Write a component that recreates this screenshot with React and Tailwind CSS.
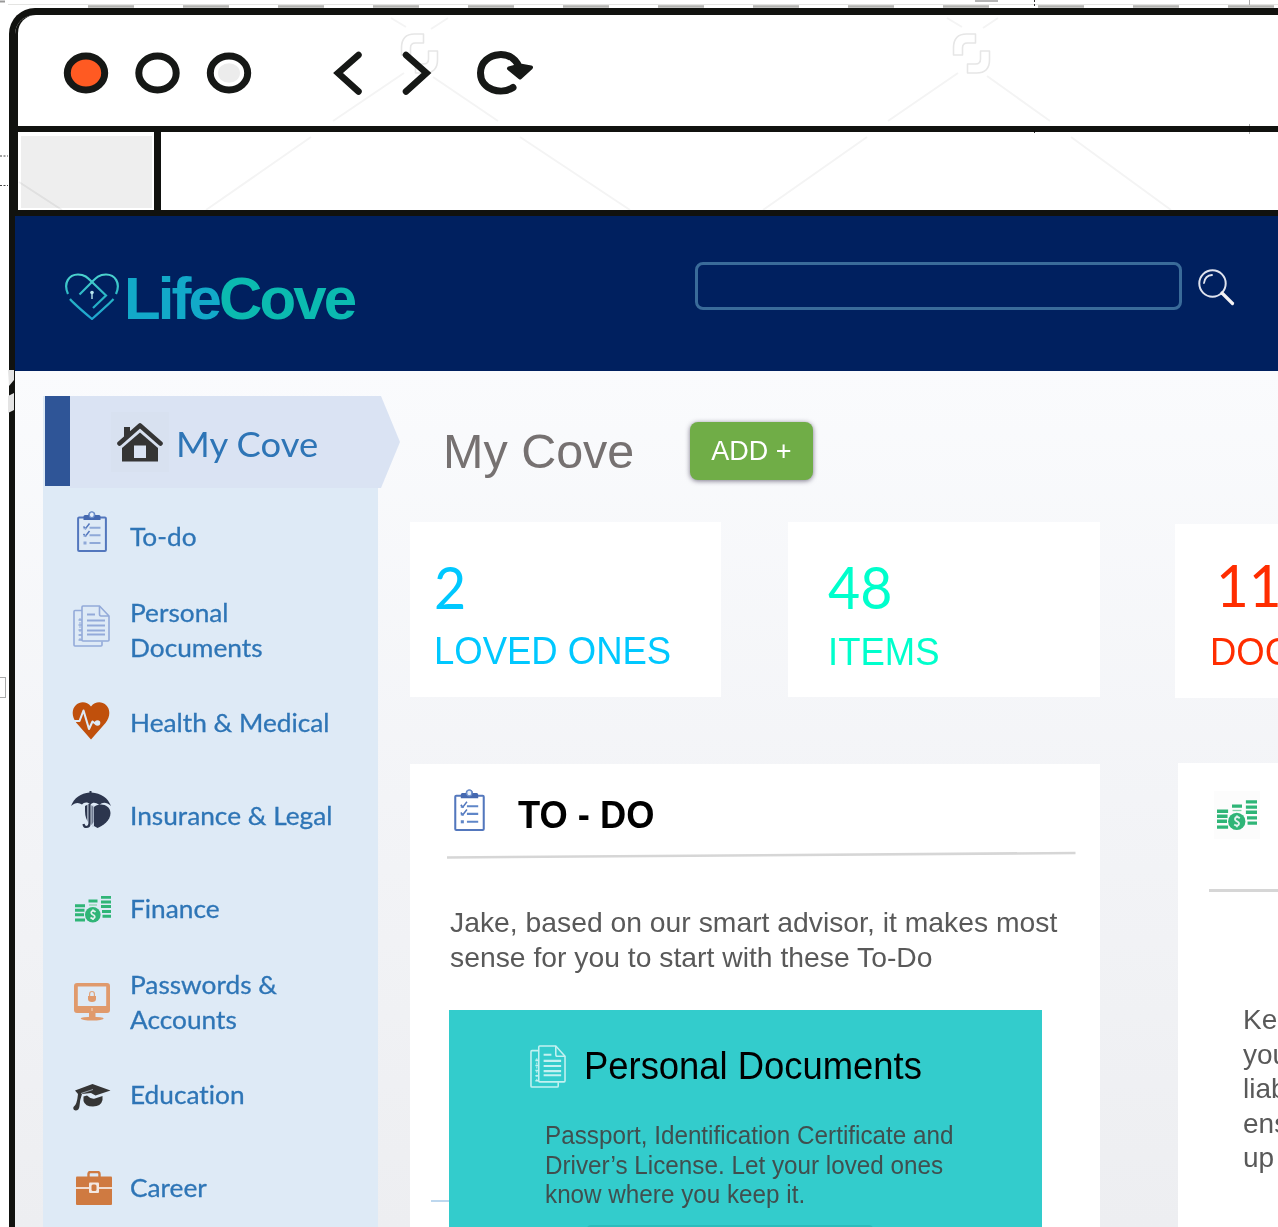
import React from "react";

function ClipboardIcon({ className, strong }) {
  const line = strong ? "#5f86c8" : "#8fa9d8";
  return (
    <svg className={className} viewBox="0 0 30 41" fill="none">
      <rect x="1.100" y="6.500" width="27.800" height="33.500" rx="1" stroke="#5377bd" strokeWidth="2" />
      <path d="M6.500 9V5.500Q6.500 4 8 4H11.300A3.400 3.400 0 0 1 18.300 4H22Q23.500 4 23.500 5.500V9Z" fill="#4468b0" />
      <ellipse cx="14.800" cy="3.800" rx="2.500" ry="2.800" fill="#e8f0fa" stroke="#6d8fcb" strokeWidth="1.200" />
      <g stroke={line} strokeWidth="2.100">
        <path d="M12.500 16.800H23.500M12.500 24.300H23.500M12.500 32H23.500" />
        <path d="M6.500 32H9.500" strokeWidth="3" />
      </g>
      <path d="M6.500 15.500L8.500 17.700L12.500 12.500M6.500 23L8.500 25.200L12.500 20" stroke="#5377bd" strokeWidth="1.500" />
      <path d="M6.500 17.500H9.500M6.500 25H9.500" stroke={line} strokeWidth="1.500" />
    </svg>
  );
}

function DocumentsIcon({ className }) {
  return (
    <svg className={className} viewBox="0 0 37 42" fill="none" stroke="currentColor" preserveAspectRatio="none">
      <path d="M9 5.500H2Q1 5.500 1 6.500V40Q1 41 2 41H28Q29 41 29 40V36.500" strokeWidth="1.600" />
      <path d="M26.500 1H10Q9 1 9 2V35Q9 36 10 36H35Q36 36 36 35V11Z" strokeWidth="1.600" />
      <path d="M26.500 1V9Q26.500 11 28 11H36" strokeWidth="1.600" />
      <path d="M14 9.500H22M14 15.500H32M14 20.500H32M14 25.500H32M14 29.500H32" strokeWidth="2" />
      <path d="M5.500 15H9M5.500 20H9M5.500 25H9M5.500 30H9M5.500 35H9" strokeWidth="1.500" />
      <path d="M7 13V36" strokeWidth="1" strokeDasharray="2 2" />
    </svg>
  );
}

function HeartIcon({ className }) {
  return (
    <svg className={className} viewBox="0 0 38 38" fill="none">
      <path d="M19 37.500L4.500 21C-.5 15 -.5 7 4 3C8.500 -1 15 -.5 19 4.500C23 -.5 29.500 -1 34 3C38.500 7 38.500 15 33.500 21Z" fill="#c0500c" />
      <path d="M1 19H7.500L11.500 8.500L17 27L20.500 19.500L24 22" stroke="#deeaf6" strokeWidth="2.100" strokeLinejoin="round" />
      <circle cx="25.500" cy="21" r="2.800" fill="#deeaf6" />
    </svg>
  );
}

function UmbrellaIcon({ className }) {
  return (
    <svg className={className} viewBox="0 0 40 38" fill="none">
      <path d="M14 15C17 12.500 20 13 22.500 16V31Q20 36 18.500 33Q14 28 14 20Z" fill="#2c364e" />
      <path d="M23.500 15.500C30 11.500 39 14 39.500 22C39.500 30 32 34.500 26.500 37L23 35V16Z" fill="#2c364e" />
      <path d="M18.500 13V32.500Q18.500 36.500 15 36.500Q12.500 36.500 12 33.500" stroke="#deeaf6" strokeWidth="4.200" />
      <path d="M18.500 13V32.500Q18.500 36 15.200 36Q13 36 12.500 33" stroke="#2c364e" strokeWidth="2.200" />
      <path d="M22 14V36" stroke="#b9c5d8" strokeWidth="1" />
      <path d="M0 15C3 7 10 2 18.500 1.500V0H20.500V1.500C30 2 37 7 40 15C35.500 11 31.500 11 28.500 14C24 11 22 11 19.500 13.500C16.500 10.500 13 11 11 13.500C7.500 11 4 11.500 0 15Z" fill="#2c364e" />
    </svg>
  );
}

function FinanceIcon({ className }) {
  return (
    <svg className={className} viewBox="0 0 36 27" fill="none">
      <path d="M0 9.700H10M0 14.200H9.500M0 18.700H9M0 24H10M13.500 5H22.500M26 1.300H36M26 6H36M26 10.600H36M27 15.600H36M27.500 20.300H36" stroke="#2fb577" strokeWidth="3" />
      <path d="M14 9H22" stroke="#86d2ab" strokeWidth="1.200" />
      <circle cx="17.800" cy="18.800" r="7.800" fill="#2fb577" />
      <path d="M20.500 16Q18 14 16.500 15.700Q15.500 17.500 18 18.800Q20.500 20 19.500 21.800Q18 23.500 15.500 21.500M18 13.500V15M18 22.500V24" stroke="#e3f2ef" strokeWidth="1.700" />
    </svg>
  );
}

function MonitorIcon({ className }) {
  return (
    <svg className={className} viewBox="0 0 36 38" fill="none">
      <path d="M3 0H33Q36 0 36 3V27Q36 30 33 30H3Q0 30 0 27V3Q0 0 3 0ZM3.800 3.500V23H32.200V3.500Z" fill="#e09a6c" fillRule="evenodd" />
      <path d="M15 30H21.500V34H15Z" fill="#e09a6c" />
      <ellipse cx="18.200" cy="35.600" rx="11.500" ry="1.900" fill="#e09a6c" />
      <path d="M15.600 13V11Q15.600 8.500 18 8.500Q20.400 8.500 20.400 11V13" stroke="#e0a47c" strokeWidth="1.200" />
      <path d="M14 13H22V16Q22 19 18 19Q14 19 14 16Z" fill="#e09a6c" />
      <path d="M18 25V28" stroke="#f3d5c0" strokeWidth="1" />
    </svg>
  );
}

function CapIcon({ className }) {
  return (
    <svg className={className} viewBox="0 0 38 27" fill="none">
      <path d="M19.500 0L37.500 6.500L22.500 11.500L18 9L9 10Q7 15 6.500 22Q6 26.500 2.500 26.500Q-.5 26 .5 23Q4 21 5 10L2 6.500Z" fill="#353535" />
      <path d="M8 9.500L20 5.500" stroke="#b4bfca" strokeWidth=".8" />
      <path d="M10.500 12.500L14 11.500Q18 15.500 22 14.500L29.500 12V16Q28 22.500 20 22.500Q12 22.500 10.500 17Z" fill="#353535" />
    </svg>
  );
}

function BriefcaseIcon({ className }) {
  return (
    <svg className={className} viewBox="0 0 36 34" fill="none">
      <path d="M12.500 6V3Q12.500 1 14.500 1H21.500Q23.500 1 23.500 3V6" stroke="#cf7a41" strokeWidth="2.400" />
      <rect y="5.500" width="36" height="28.500" rx="1" fill="#cf7a41" />
      <path d="M0 17H36" stroke="#f0dccf" strokeWidth="1.800" />
      <rect x="13" y="11.500" width="10" height="10.500" rx="1" fill="#f3e8e2" />
      <rect x="15.500" y="13.500" width="5" height="6.500" rx="1.500" fill="#cf7a41" />
    </svg>
  );
}

function HouseIcon({ className }) {
  return (
    <svg className={className} viewBox="0 0 46 40" fill="none">
      <path d="M7 5H13V10L7 16Z" fill="#353535" />
      <path d="M2.500 21.500L23 3.500L43.500 21.500" stroke="#353535" strokeWidth="4.600" strokeLinecap="round" strokeLinejoin="round" />
      <path d="M23 10.500L41 26V39.500H5V26Z" fill="#353535" />
      <rect x="17" y="23.500" width="12" height="12.500" fill="#dae3f3" />
    </svg>
  );
}

function LogoMark() {
  return (
    <svg className="h-12 w-[54px] shrink-0" viewBox="0 0 54 48" fill="none" strokeWidth="2.200">
      <defs>
        <linearGradient id="mark" x1="0" y1="0" x2="0" y2="48" gradientUnits="userSpaceOnUse">
          <stop offset="0" stopColor="#4fd6cf" />
          <stop offset=".55" stopColor="#27b3c4" />
          <stop offset="1" stopColor="#1ea5d2" />
        </linearGradient>
      </defs>
      <g stroke="url(#mark)">
        <path d="M3 22C-2 11 4 2.500 13 2.500C20 2.500 23 6 27 10L41 23.500L28 36" />
        <path d="M51 22C56 11 50 2.500 41 2.500C33 2.500 30 7 26 11L14.500 22.500" />
        <path d="M5 27Q8 31 27 47Q45 31 48.500 27" />
      </g>
      <path d="M27 21V27" stroke="#b9e6ee" strokeWidth="1.400" />
      <circle cx="27" cy="20.500" r="1.800" fill="#b9e6ee" />
    </svg>
  );
}

function Watermark() {
  const glyph = "M1 19V15Q1 1 14 1H23V10H15Q10 10 10 15V22H1ZM28 18H37V27Q37 40 24 40H15V31H23Q28 31 28 26Z";
  return (
    <svg className="pointer-events-none absolute left-0 top-0 h-[216px] w-[1278px] mix-blend-multiply" viewBox="0 0 1278 216" fill="none" stroke="#f4f4f4" strokeWidth="2">
      <path d="M391 18L406 27M448 18L431 29M404 73L333 121M311 137L206 210M433 77L498 121M520 137L630 210" />
      <path d="M947 18L962 27M998 18L983 28M958 73L888 121M867 137L763 210M987 76L1050 121M1071 137L1171 210" />
      <path d="M19 182L62 210" stroke="#f0f0f0" />
      <g stroke="#e6e6e6" strokeWidth="1.600" strokeLinejoin="round">
        <path transform="translate(400.500 33)" d={glyph} />
        <path transform="translate(952.500 33)" d={glyph} />
      </g>
      <path d="M88 6.500H1278" stroke="#b3b3b0" strokeWidth="2.500" strokeDasharray="46 49" />
      <path d="M8 4.500H1278" stroke="#e4e4e2" strokeWidth="1" />
      <path d="M975 1H998" stroke="#b5b5b5" />
      <path d="M0 1.500H5" stroke="#999" />
      <path d="M0 156H8M0 185.500H8" stroke="#444" strokeWidth="1" strokeDasharray="2 1.500" />
      <path d="M1034.500 0V8M1034.500 131V134" stroke="#333" strokeWidth="1" strokeDasharray="2 2" />
      <path d="M1249.500 0V5M1249.500 124V134" stroke="#aaa" strokeWidth="1" />
    </svg>
  );
}

function BrowserControls() {
  return (
    <svg className="ml-11 h-[50px] w-[480px]" viewBox="62 47.500 480 50" fill="none" stroke="#161816" strokeWidth="7">
      <ellipse cx="86" cy="72.500" rx="18.700" ry="17" fill="#ff5a22" />
      <ellipse cx="157.500" cy="72.500" rx="18.700" ry="17" />
      <ellipse cx="229" cy="72.500" rx="18.700" ry="17" />
      <ellipse cx="229" cy="72.500" rx="11" ry="9.800" fill="#ececec" stroke="none" />
      <g strokeWidth="6.500" strokeLinecap="round" strokeLinejoin="miter">
        <path d="M358.500 54.500L338 72.500L358.500 91" />
        <path d="M406 54.500L426.500 72.500L406 91" />
        <path d="M513 87C502 94.500 480.500 90 480.500 72.500C480.500 50 517 47 519.500 70" strokeWidth="7" />
      </g>
      <path d="M509 68L520 65L531 67L520 77Z" fill="#161816" strokeWidth="4" strokeLinejoin="round" />
    </svg>
  );
}

function NavItem({ icon, children }) {
  return (
    <li className="flex h-[93px] items-center">
      <span className="relative ml-[27px] block h-[52px] w-11 shrink-0">{icon}</span>
      <span className="ml-4 origin-left scale-x-[1.05] whitespace-pre font-[Lato,sans-serif] text-[25px] leading-[34.500px] text-[#2e75b6] [-webkit-text-stroke:0.3px_#2e75b6] [font-variant-ligatures:none]">{children}</span>
    </li>
  );
}

function Sidebar() {
  return (
    <aside className="ml-7 mt-[25px] w-[335px] shrink-0 bg-[#deeaf6]">
      <div className="ml-0.5 flex h-[92px] w-[355px]">
        <div className="h-[90px] w-[25px] shrink-0 bg-[#2f5597]" />
        <div className="flex w-[330px] items-center bg-[#dae3f3] [clip-path:polygon(0_0,311px_0,100%_50%,311px_100%,0_100%)]">
          <span className="ml-[41px] flex h-[60px] w-[58px] items-center justify-center bg-[#d8e1f0]">
            <HouseIcon className="h-10 w-[46px]" />
          </span>
          <span className="ml-[7px] mt-0.5 origin-left scale-x-[1.04] whitespace-nowrap font-[Lato,sans-serif] text-[35px] leading-none text-[#2e75b6]">My Cove</span>
        </div>
      </div>
      <ul className="pt-0.5">
        <NavItem icon={<ClipboardIcon className="absolute left-[6.500px] top-0 h-[41px] w-[30px]" />}>To-do</NavItem>
        <NavItem icon={<DocumentsIcon className="absolute left-[3px] top-[1px] h-[42px] w-[37px] text-[#93aad9]" />}>{"Personal\nDocuments"}</NavItem>
        <NavItem icon={<HeartIcon className="absolute left-[2px] top-[5px] h-[38px] w-[38px]" />}>Health &amp; Medical</NavItem>
        <NavItem icon={<UmbrellaIcon className="absolute left-[1px] top-[1px] h-[38px] w-10" />}>Insurance &amp; Legal</NavItem>
        <NavItem icon={<FinanceIcon className="absolute left-[5px] top-[13px] h-[27px] w-9" />}>Finance</NavItem>
        <NavItem icon={<MonitorIcon className="absolute left-[4px] top-[7px] h-[38px] w-9" />}>{"Passwords &\nAccounts"}</NavItem>
        <NavItem icon={<CapIcon className="absolute left-[3px] top-[15.500px] h-[27px] w-[38px]" />}>Education</NavItem>
        <NavItem icon={<BriefcaseIcon className="absolute left-[6px] top-[9px] h-[34px] w-9" />}>Career</NavItem>
      </ul>
    </aside>
  );
}

function Stats() {
  return (
    <div className="mt-[42px] flex">
      <div className="h-[175px] w-[311px] shrink-0 bg-white pl-6 text-[#00c8ff]">
        <p className="mt-[35px] origin-left scale-x-[0.94] font-[Lato,sans-serif] text-[59px] leading-[60px]">2</p>
        <p className="mt-3 origin-left scale-x-[0.96] whitespace-nowrap text-[38px] leading-[44px]">LOVED ONES</p>
      </div>
      <div className="ml-[67px] h-[175px] w-[312px] shrink-0 bg-white pl-10 text-[#00ffcc]">
        <p className="mt-[35px] origin-left scale-x-[0.94] font-[Lato,sans-serif] text-[59px] leading-[60px]">48</p>
        <p className="mt-[13px] origin-left scale-x-[0.96] whitespace-nowrap text-[38px] leading-[44px]">ITEMS</p>
      </div>
      <div className="ml-[75px] mt-[2px] h-[174px] w-[311px] shrink-0 bg-white pl-[35px] text-[#ff2d00]">
        <p className="ml-[6px] mt-[31px] origin-left scale-x-[0.96] font-[Lato,sans-serif] text-[59px] leading-[60px]">11</p>
        <p className="mt-[15px] origin-left scale-x-[0.96] whitespace-nowrap text-[38px] leading-[44px]">DOC</p>
      </div>
    </div>
  );
}

function TodoPanel() {
  return (
    <section className="h-[480px] w-[690px] shrink-0 bg-white">
      <div className="flex h-[67px] items-end pl-[44px]">
        <ClipboardIcon strong className="h-[42px] w-[31px]" />
        <h2 className="ml-[33px] origin-left scale-x-[0.955] whitespace-nowrap text-[38px] font-bold leading-[32px] text-black">TO - DO</h2>
      </div>
      <svg className="ml-[37px] mt-5 block h-2 w-[630px]" viewBox="0 0 630 8">
        <path d="M0 6.500L628.500 2" stroke="#d6d6d6" strokeWidth="2.600" />
      </svg>
      <p className="ml-10 mt-[47px] w-max origin-left scale-x-[1.011] whitespace-nowrap text-[28px] leading-[34.500px] text-[#595959]">
        Jake, based on our smart advisor, it makes most
        <br />
        sense for you to start with these To-Do
      </p>
      <div className="mt-[35px] flex">
        <div className="ml-[21px] mt-[190px] h-0.5 w-[18px] bg-[#bdd7ee]" />
        <div className="h-[230px] w-[593px] bg-[#33cccc]">
          <div className="flex pl-[81px] pt-[35px]">
            <DocumentsIcon className="h-[43px] w-9 text-[#c4f1f1]" />
            <h3 className="ml-[18px] origin-left scale-x-[0.958] whitespace-nowrap text-[38px] leading-[42px] text-black">Personal Documents</h3>
          </div>
          <p className="ml-24 mt-[33px] w-max origin-left scale-x-[0.97] whitespace-nowrap text-[25px] leading-[29.500px] text-[#404f4f]">
            Passport, Identification Certificate and
            <br />
            Driver’s License. Let your loved ones
            <br />
            know where you keep it.
          </p>
          <div className="ml-[138px] mt-[15px] h-5 w-[286px] rounded bg-[#2cbcbc]" />
        </div>
      </div>
    </section>
  );
}

function FinancePanel() {
  return (
    <section className="-mt-px ml-[78px] h-[480px] w-[400px] shrink-0 bg-white">
      <div className="ml-[36px] mt-[28px] flex h-12 w-[46px] items-center justify-center bg-[#fcfcfc]">
        <FinanceIcon className="h-[31px] w-10" />
      </div>
      <div className="ml-[31px] mt-[50px] h-[3px] w-[369px] bg-[#d6d6d6]" />
      <p className="ml-[65px] mt-[111px] whitespace-nowrap text-[28px] leading-[34.500px] text-[#595959]">
        Ke
        <br />
        you
        <br />
        liab
        <br />
        ens
        <br />
        up
      </p>
    </section>
  );
}

export default function App() {
  return (
    <div className="relative h-[1227px] w-[1278px] overflow-hidden bg-white pt-2 font-['Liberation_Sans',Arial,sans-serif]">
      <div className="ml-[9px] h-[1219px] overflow-hidden rounded-tl-[26px] border-l-[6px] border-t-[7px] border-[#11120f]">
        <div className="bg-[#11120f] pl-[3px]">
          <div className="flex h-[111px] items-center rounded-tl-[18px] bg-white pt-1">
            <BrowserControls />
          </div>
          <div className="mt-[6px] flex h-[78px] bg-white">
            <div className="w-[136px] pb-0.5 pl-[3px] pr-0.5 pt-1">
              <div className="h-full bg-[#eeeeee]" />
            </div>
            <div className="w-[7px] bg-[#11120f]" />
          </div>
          <div className="h-[6px]" />
        </div>
        <header className="flex h-[155px] items-start bg-[#00205f]">
          <div className="ml-[50px] mt-[56px] flex">
            <LogoMark />
            <span className="ml-[5px] mt-px origin-left whitespace-nowrap text-[60px] font-bold leading-[52px] tracking-[-2.900px] text-[#0bbab0]">
              <span className="text-[#12a9c9]">Life</span>Cove
            </span>
          </div>
          <div className="absolute left-[695px] top-[262px] flex">
            <div className="h-12 w-[487px] rounded-lg border-[3px] border-[#3a6b99]" />
            <svg className="ml-4 mt-[6px] h-[38px] w-[38px]" viewBox="0 0 38 38" fill="none" stroke="#dfe3ee" strokeLinecap="round">
              <circle cx="14.500" cy="15.500" r="13.200" strokeWidth="2" />
              <path d="M6 15Q7 7.500 14 7" strokeWidth="1.800" />
              <path d="M24 25L34.500 35.500" stroke="#f4f2f4" strokeWidth="3.200" />
            </svg>
          </div>
        </header>
        <div className="flex h-[856px] bg-linear-to-b from-[#fafbfd] via-[#f3f4f7] to-[#edeef1]">
          <Sidebar />
          <main className="ml-8 min-w-0 flex-1">
            <div className="mt-[51px] flex h-[58px] items-center">
              <h1 className="w-[280px] shrink-0 whitespace-nowrap pl-[33px] text-[48.500px] leading-[58px] text-[#767171]">My Cove</h1>
              <button className="h-[58px] w-[123px] shrink-0 whitespace-nowrap rounded-lg bg-[#70ad47] text-[27px] leading-none text-white shadow-[0_1px_5px_rgba(40,30,60,0.6)]">ADD +</button>
            </div>
            <Stats />
            <div className="mt-[66px] flex">
              <TodoPanel />
              <FinancePanel />
            </div>
          </main>
        </div>
      </div>
      <Watermark />
      <svg className="absolute left-0 top-[366px] h-[340px] w-4" viewBox="0 366 16 340">
        <path d="M8 370H14V380L9 386ZM8 396L14 393V410L8 413Z" fill="#e4e4e4" />
        <rect x="-6" y="677.500" width="11.500" height="20" fill="#fff" stroke="#aaa" />
      </svg>
    </div>
  );
}
